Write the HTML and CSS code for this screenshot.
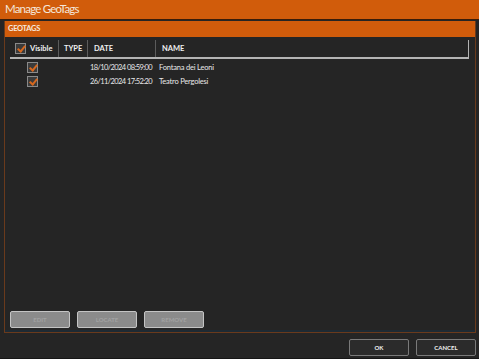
FILE: index.html
```html
<!DOCTYPE html>
<html>
<head>
  <link rel="stylesheet" href="styles.css">
</head>
<body>
  <div class="window">
    <div class="titlebar">Manage GeoTags</div>

    <div class="panel">
      <div class="panel-header">GEOTAGS</div>
      <div class="panel-body">
        <div class="grid">
          <div class="grid-head">
            <div class="col col-visible">
              <span class="check"></span>
              <span>Visible</span>
            </div>
            <div class="col col-type">TYPE</div>
            <div class="col col-date">DATE</div>
            <div class="col col-name">NAME</div>
          </div>
          <div class="grid-row">
            <div class="col col-visible"><span class="check"></span></div>
            <div class="col col-type"></div>
            <div class="col col-date">18/10/2024 08:59:00</div>
            <div class="col col-name">Fontana dei Leoni</div>
          </div>
          <div class="grid-row">
            <div class="col col-visible"><span class="check"></span></div>
            <div class="col col-type"></div>
            <div class="col col-date">26/11/2024 17:52:20</div>
            <div class="col col-name">Teatro Pergolesi</div>
          </div>
        </div>

        <div class="panel-actions">
          <button class="btn btn-disabled">EDIT</button>
          <button class="btn btn-disabled">LOCATE</button>
          <button class="btn btn-disabled">REMOVE</button>
        </div>
      </div>
    </div>

    <div class="dialog-actions">
      <button class="btn btn-dark">OK</button>
      <button class="btn btn-dark">CANCEL</button>
    </div>
  </div>
</body>
</html>
```

FILE: styles.css
```css
body {
  margin: 0;
  width: 479px;
  height: 359px;
  font-family: Lato, 'Open Sans', sans-serif;
  background-color: #1b1b1b;
  overflow: hidden;
}
.window {
  height: 358px;
  background-color: #252525;
  border-bottom: 1px solid #161616;
  display: flex;
  flex-direction: column;
}
.titlebar {
  height: 19px;
  line-height: 18px;
  padding-left: 5px;
  background-color: #d15c0b;
  border-bottom: 1px solid #3a1d0a;
  color: #f4e6da;
  font-size: 11.5px;
  letter-spacing: -0.8px;
}
.panel {
  margin: 1px 3px 0 4px;
  height: 311px;
  border: 1px solid #6a3a1c;
  border-top: none;
  box-shadow: inset 0 -2px 0 #1e2a33;
  display: flex;
  flex-direction: column;
}
.panel-header {
  height: 16px;
  line-height: 16px;
  padding-left: 3px;
  background-color: #d15c0b;
  color: #f6e9de;
  font-size: 7.5px;
  font-weight: 700;
  letter-spacing: -0.3px;
}
.panel-body {
  flex: 1;
  display: flex;
  flex-direction: column;
  justify-content: space-between;
  padding: 3px 7px 4px 5px;
}
.grid {
  width: 459px;
}
.grid-head {
  display: flex;
  height: 17px;
  border-bottom: 2px solid #b4b4b4;
  border-right: 1px solid #b4b4b4;
  color: #f0f0f0;
  font-size: 7.5px;
  font-weight: 700;
}
.grid-head .col {
  border-right: 1px solid #5c5c5c;
  line-height: 15px;
}
.grid-head .col-name {
  border-right: none;
}
.grid-row {
  display: flex;
  height: 14px;
  align-items: center;
  color: #e8e8e8;
  font-size: 7.5px;
  letter-spacing: -0.2px;
}
.col {
  display: flex;
  align-items: center;
  gap: 4px;
  padding-left: 5px;
  box-sizing: border-box;
}
.col-visible {
  width: 49px;
}
.col-type {
  width: 29px;
}
.col-date {
  width: 68px;
  padding-left: 6px;
  white-space: nowrap;
}
.grid-row .col-date {
  padding-left: 2px;
  letter-spacing: -0.6px;
}
.col-name {
  flex: 1;
  padding-left: 6px;
}
.grid-row .col-name {
  padding-left: 3px;
}
.grid-row .col-visible {
  padding-left: 17px;
}
.grid-head + .grid-row {
  margin-top: 1px;
}
.check {
  position: relative;
  width: 9px;
  height: 9px;
  border: 1px solid #8a8a8a;
  background-color: #3b3b3b;
  flex-shrink: 0;
}
.check::after {
  content: "";
  position: absolute;
  left: 3px;
  top: 0;
  width: 3px;
  height: 6px;
  border-right: 2px solid #d7681e;
  border-bottom: 2px solid #d7681e;
  transform: rotate(40deg);
}
.panel-actions {
  display: flex;
  gap: 7px;
}
.btn {
  width: 60px;
  height: 17px;
  padding: 0;
  font-family: inherit;
  font-size: 6px;
  font-weight: 700;
  border-radius: 2px;
  cursor: pointer;
}
.btn-disabled {
  background-color: #8b8b8b;
  border: 1px solid #c4c4c4;
  color: #a2a2a2;
}
.btn-dark {
  background-color: #2b2b2b;
  border: 1px solid #7a7a7a;
  color: #f2f2f2;
}
.dialog-actions {
  display: flex;
  justify-content: flex-end;
  gap: 7px;
  margin-top: 6px;
  padding-right: 3px;
}
```
